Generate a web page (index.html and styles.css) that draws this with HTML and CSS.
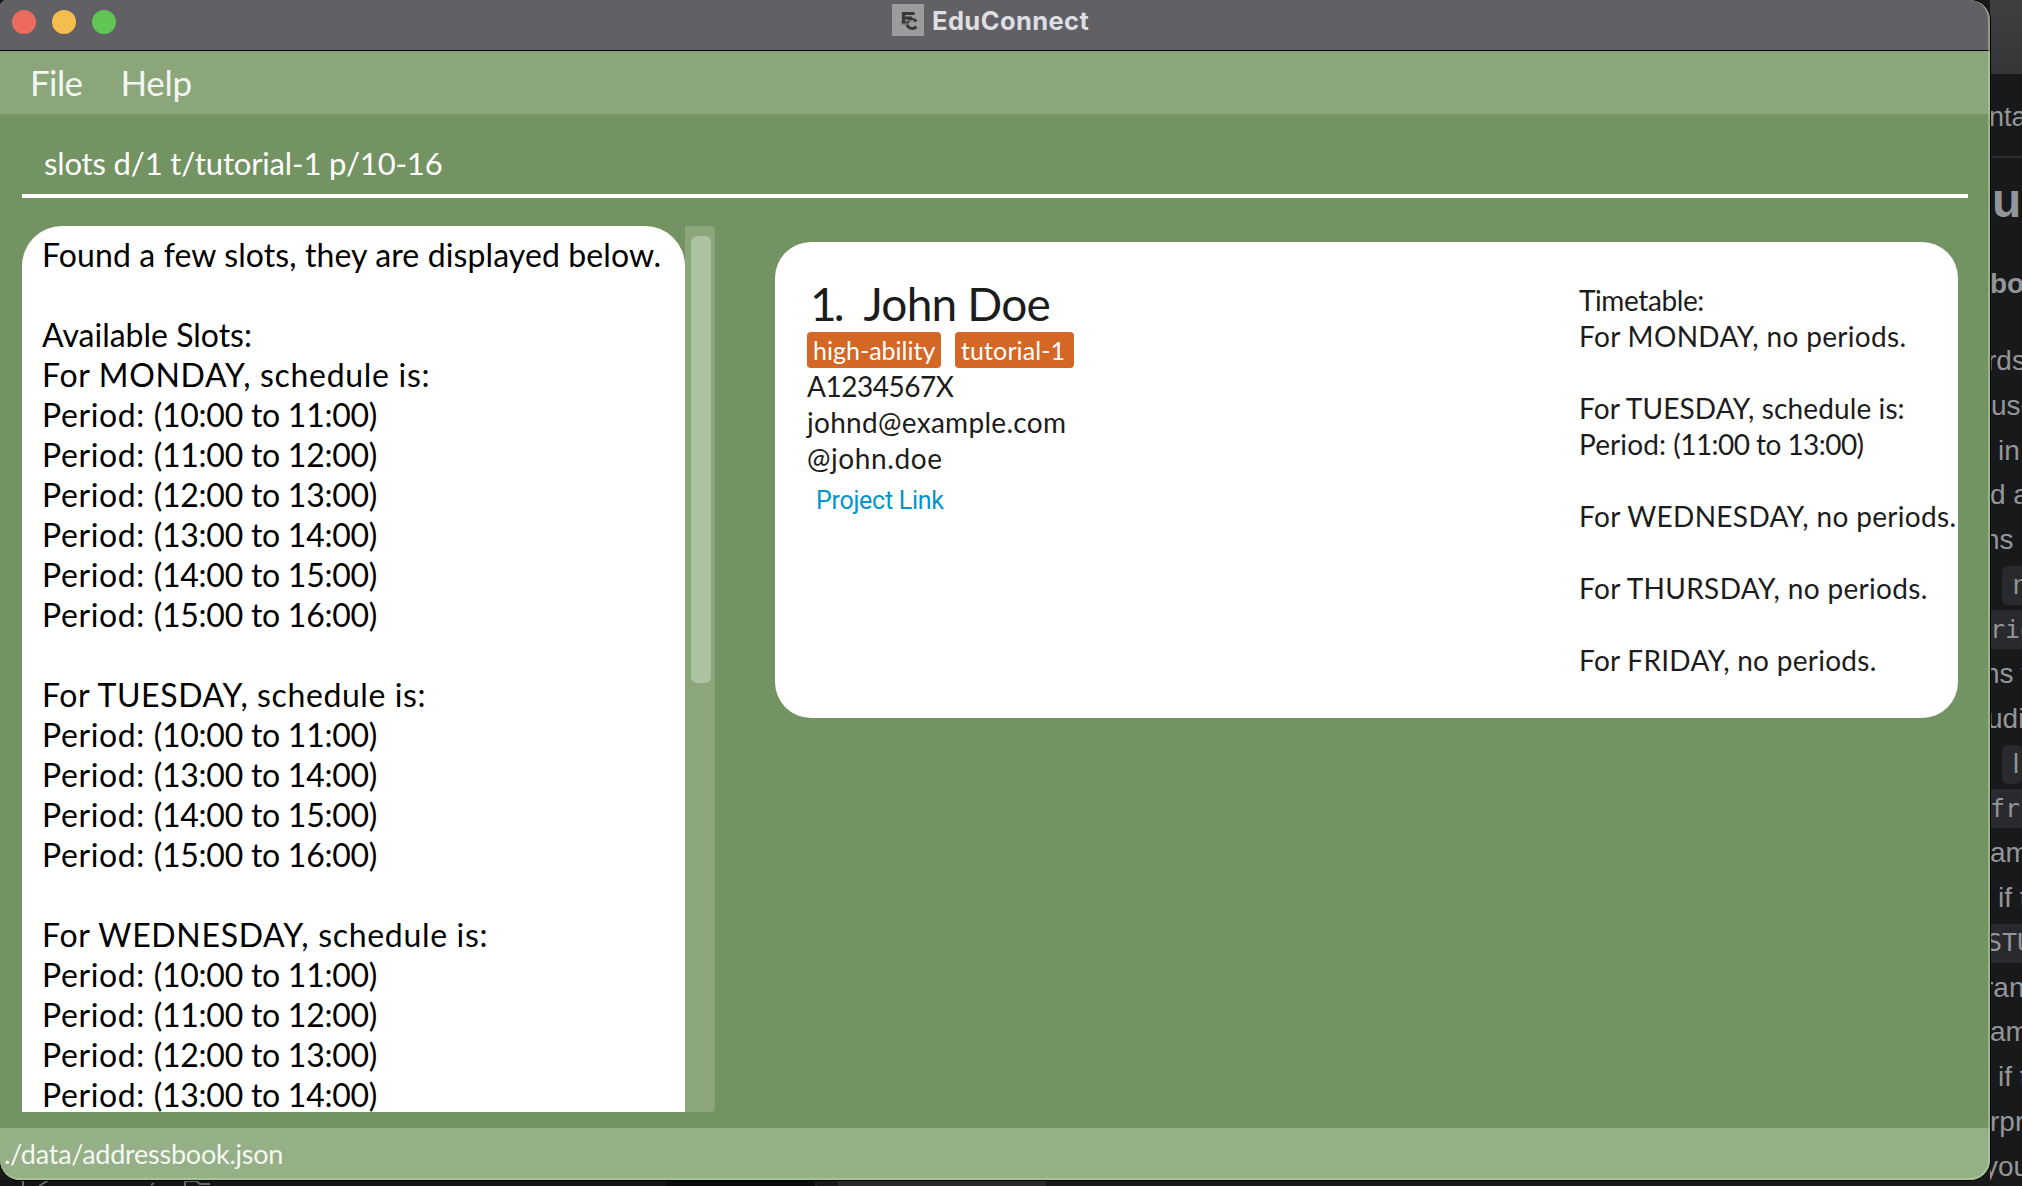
FILE: index.html
```html
<!DOCTYPE html>
<html lang="en">
<head>
<meta charset="utf-8">
<title>EduConnect</title>
<link rel="stylesheet" href="styles.css">
</head>
<body>
<div class="desktop">
  <aside class="docs">
    <div class="docs-toolbar"></div>
    <div class="docs-crumb">nta</div>
    <div class="docs-heading">u</div>
    <div class="docs-sub">bo</div>
    <div class="docs-body">
      <p class="cut2">rds</p><p class="s4">use</p><p class="s9">in</p><p>d a</p><p class="cut6">ns i</p>
      <p class="chip"><code>n</code></p><p class="code">rio</p><p class="cut6">ns v</p><p class="cut2">udi</p>
      <p class="chip"><code>l</code></p><p class="code">fri</p><p>am</p><p class="s9">if t</p><p class="code cut2">STU</p>
      <p class="s3">ran</p><p>am</p><p class="s9">if t</p><p>rpr</p><p class="cut6">you a</p>
    </div>
  </aside>
  <div class="dock">
    <div class="dock-icons"><svg width="220" height="6" viewBox="0 0 220 6" fill="none" stroke="#66676a" stroke-width="2"><path d="M23 0v6M39 6l10-6M151 5l3-2M185 6V3q0-2 3-2h8l4 3h10"/></svg></div>
    <div class="dock-dark"></div><div class="dock-tab"></div>
  </div>
  <main class="window">
    <header class="titlebar">
      <div class="lights"><i class="red"></i><i class="yellow"></i><i class="green"></i></div>
      <div class="title">
        <svg width="32" height="32" viewBox="0 0 32 32"><rect width="32" height="32" fill="#9c9c9e"/><path d="M11.500 18V9.500h11M11 14h9" fill="none" stroke="#38383b" stroke-width="3.200"/><path d="M9.500 19h6.500M24.300 17.500a5 4.500 0 1 0 0 5" fill="none" stroke="#38383b" stroke-width="3"/><path d="M13 16.800h9M9.500 20h8" stroke="#8d8d8f" stroke-width="1"/></svg>
        <span>EduConnect</span>
      </div>
    </header>
    <nav class="menu"><span class="file">File</span><span class="help">Help</span></nav>
    <div class="command">slots d/1 t/tutorial-1 p/10-16</div>
    <section class="content">
      <div class="result">
        <div class="result-text">
          <p class="found">Found a few slots, they are displayed below.</p>
          <p></p>
          <p>Available Slots:</p>
          <p class="day">For MONDAY, schedule is:</p>
          <p class="period">Period: <span>(10:00 to 11:00)</span></p>
          <p class="period">Period: <span>(11:00 to 12:00)</span></p>
          <p class="period">Period: <span>(12:00 to 13:00)</span></p>
          <p class="period">Period: <span>(13:00 to 14:00)</span></p>
          <p class="period">Period: <span>(14:00 to 15:00)</span></p>
          <p class="period">Period: <span>(15:00 to 16:00)</span></p>
          <p></p>
          <p class="day tue">For TUESDAY, schedule is:</p>
          <p class="period">Period: <span>(10:00 to 11:00)</span></p>
          <p class="period">Period: <span>(13:00 to 14:00)</span></p>
          <p class="period">Period: <span>(14:00 to 15:00)</span></p>
          <p class="period">Period: <span>(15:00 to 16:00)</span></p>
          <p></p>
          <p class="day">For WEDNESDAY, schedule is:</p>
          <p class="period">Period: <span>(10:00 to 11:00)</span></p>
          <p class="period">Period: <span>(11:00 to 12:00)</span></p>
          <p class="period">Period: <span>(12:00 to 13:00)</span></p>
          <p class="period">Period: <span>(13:00 to 14:00)</span></p>
        </div>
        <div class="scrollbar"><div class="thumb"></div></div>
      </div>
      <article class="card">
        <div class="person">
          <h1><span class="num">1.</span><span class="name">John Doe</span></h1>
          <div class="tags"><span class="tag">high-ability</span><span class="tag">tutorial-1</span></div>
          <p class="sid">A1234567X</p>
          <p class="mail">johnd@example.com</p>
          <p class="handle">@john.doe</p>
          <a class="link">Project Link</a>
        </div>
        <div class="timetable">
          <p class="caption">Timetable:</p>
          <p>For MONDAY, no periods.</p>
          <p></p>
          <p class="busy">For TUESDAY, schedule is:</p>
          <p class="slot">Period: <span>(11:00 to 13:00)</span></p>
          <p></p>
          <p>For WEDNESDAY, no periods.</p>
          <p></p>
          <p>For THURSDAY, no periods.</p>
          <p></p>
          <p class="fri">For FRIDAY, no periods.</p>
        </div>
      </article>
    </section>
    <footer class="status">./data/addressbook.json</footer>
  </main>
</div>
</body>
</html>
```
FILE: styles.css
```css
* { box-sizing: border-box; }
body { margin: 0; overflow: hidden; background: #18191b; font-family: "Gill Sans", Lato, sans-serif; }
p, h1 { margin: 0; font-weight: 400; }
.desktop { position: relative; width: 2022px; height: 1186px; overflow: hidden; background: #18191b; }

.docs { margin-left: 1990px; width: 32px; height: 1186px; overflow: hidden; white-space: nowrap; color: #949599; font: 28px/44.75px "Liberation Sans", sans-serif; }
.docs-toolbar { height: 74px; background: linear-gradient(#3e3f41, #363739); }
.docs-crumb { height: 84px; border-bottom: 2px solid #2d2e31; line-height: 86px; font-size: 27px; text-indent: -1px; }
.docs-heading { height: 81px; font-size: 48px; font-weight: 700; line-height: 85px; text-indent: 2px; }
.docs-sub { height: 100px; font-weight: 700; line-height: 90px; }
.docs-body p { height: 44.75px; }
.docs-body .s4 { text-indent: 1px; }
.docs-body .s3 { text-indent: -6px; }
.docs-body .s9 { text-indent: 8px; }
.docs-body .cut6 { text-indent: -6px; }
.docs-body .cut2 { text-indent: -3px; }
.docs-body .chip { display: flex; align-items: center; padding-left: 12px; }
.chip code { width: 40px; height: 39px; padding-left: 11px; border-radius: 6px; background: #292a2e; font: 27px/38px "Liberation Sans", sans-serif; }
.docs-body .code { background: linear-gradient(#292a2e, #292a2e) 0 50% / 100% 39px no-repeat; font-family: "DejaVu Sans Mono", monospace; font-size: 25px; }

.dock { position: absolute; left: 0; bottom: 0; width: 1990px; height: 6px; display: flex; background: #17181a; }
.dock-icons { width: 666px; height: 6px; background: #141417; line-height: 0; }
.dock-dark { width: 151px; background: #0b0a0d; border-right: 2px solid #202124; }
.dock-tab { width: 208px; margin-left: 21px; background: #29292b; }

.window { position: absolute; left: 0; top: 0; width: 1990px; height: 1180px; display: flex; flex-direction: column; overflow: hidden; border-radius: 6px 20px 20px 20px; background: #739363; box-shadow: 0 0 0 1px #000; }
.window::after { content: ""; position: absolute; inset: 0; border: solid rgba(190, 215, 170, .5); border-width: 0 2px 2px 0; border-radius: 6px 20px 20px 20px; pointer-events: none; }
.titlebar { height: 51px; flex: none; display: grid; grid-template-columns: 892px 1fr; background: #616065; border-bottom: 1px solid #000; }
.lights { display: flex; gap: 16px; padding: 10px 0 0 12px; }
.lights i { width: 24px; height: 24px; border-radius: 50%; }
.red { background: #ed6a5e; }
.yellow { background: #f5bf4f; }
.green { background: #61c554; }
.title { display: flex; gap: 8px; padding-top: 4px; color: #dfdee3; font: 700 25.5px/34px Inter, sans-serif; letter-spacing: .4px; }
.menu { height: 63px; flex: none; display: flex; padding-left: 30px; background: #8ba67a; color: #f3f6f1; font-size: 35px; line-height: 63px; }
.file { letter-spacing: -.6px; }
.help { margin-left: 38px; letter-spacing: -.3px; }
.command { height: 84px; flex: none; margin: 0 22px; padding-left: 22px; border-bottom: 4px solid #fff; color: #fff; font-size: 31px; line-height: 98px; letter-spacing: -.15px; }
.content { height: 930px; flex: none; display: flex; align-items: flex-start; padding: 28px 32px 16px 22px; }
.result { width: 693px; height: 886px; display: flex; }
.result-text { width: 663px; height: 886px; overflow: hidden; padding: 9px 0 0 20px; border-radius: 40px 40px 0 0; background: #fff; color: #000; font-size: 32px; white-space: nowrap; }
.result-text p { height: 40px; line-height: 40px; }
.found { letter-spacing: .11px; }
.day { letter-spacing: .69px; }
.day.tue { letter-spacing: .6px; }
.period { letter-spacing: .6px; }
.period span { letter-spacing: -.25px; }
.scrollbar { width: 30px; padding: 10px 4px 0 6px; border-radius: 0 4px 4px 0; background: #8ba67a; }
.thumb { height: 447px; border-radius: 6px; background: #adc2a0; }
.card { width: 1183px; height: 476px; margin: 16px 0 0 60px; display: flex; border-radius: 36px; background: #fff; color: #1c1c1c; white-space: nowrap; font-size: 28px; }
.person { width: 773px; padding: 34px 0 0 32px; }
.person p { height: 36px; line-height: 36px; }
.person h1 { height: 56px; font-size: 46px; line-height: 56px; display: flex; padding-left: 3px; }
.num { letter-spacing: -3px; }
.name { margin-left: 22px; letter-spacing: -.8px; }
.tags { height: 36px; display: flex; gap: 14px; }
.tag { height: 36px; border-radius: 4px; background: #d36726; color: #fff; font-size: 25px; line-height: 37px; padding-left: 6px; width: 134px; }
.tag + .tag { width: 119px; letter-spacing: .1px; }
.sid { letter-spacing: -.5px; }
.mail { letter-spacing: .3px; }
.handle { letter-spacing: .6px; }
.link { display: block; margin: 7px 0 0 9px; color: #0096c9; font: 25px/36px Roboto, sans-serif; letter-spacing: -.28px; }
.timetable { padding: 40px 0 0 31px; }
.timetable p { height: 36px; line-height: 36px; letter-spacing: .33px; }
.timetable .caption { letter-spacing: -.4px; }
.timetable .busy { letter-spacing: .11px; }
.timetable .slot { letter-spacing: .1px; }
.slot span { letter-spacing: -.55px; }
.timetable .fri { letter-spacing: .27px; }
.status { height: 52px; flex: none; padding-left: 4px; background: #95af86; color: #f5f8f3; font-size: 27px; line-height: 52px; letter-spacing: -.25px; }
```
